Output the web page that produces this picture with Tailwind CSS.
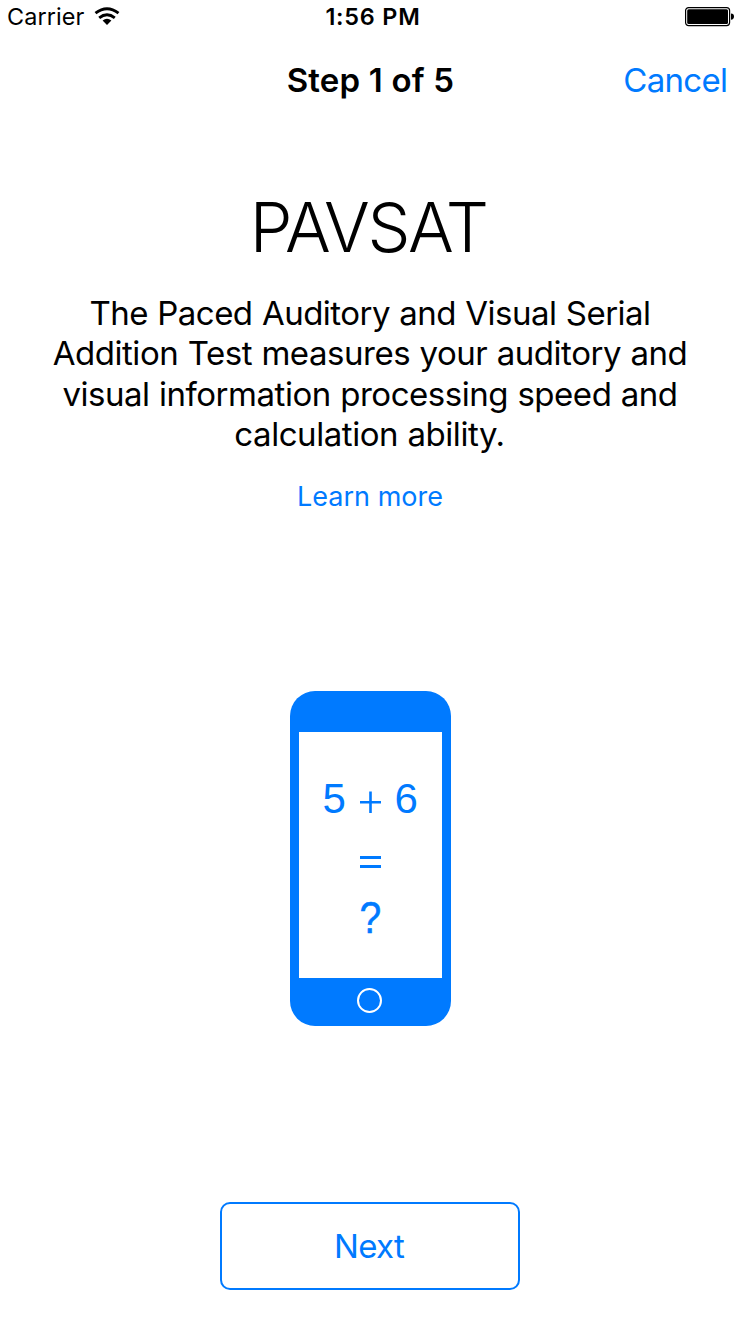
<!DOCTYPE html>
<html lang="en"><head><meta charset="utf-8"><title>PAVSAT</title>
<script src="https://cdn.jsdelivr.net/npm/@tailwindcss/browser@4"></script></head>
<body class="bg-white text-black font-['Inter',sans-serif]">
<main class="flex h-[1324px] w-[740px] flex-col items-center overflow-visible whitespace-nowrap">
<header class="grid h-[33px] w-full grid-cols-[1fr_auto_1fr] items-center pl-[6px] pr-[5px] leading-[33px]">
<div class="flex items-center gap-[10px] pl-[1px]"><span class="text-[23.4px] tracking-[0.1px]">Carrier</span>
<svg class="mb-px h-[18px] w-[26px]" viewBox="0 0 26 18"><path fill="none" stroke="#000" stroke-width="2.9" d="M1.5 6.2Q13-2.9 24.5 6.2M5.2 10.8Q13 4.6 20.8 10.8"/><path d="M8.6 13.5Q13 10 17.4 13.5L13 18Z"/></svg></div>
<span class="pl-[5px] text-[23.4px] font-semibold tracking-[0.8px]">1:56 PM</span>
<svg class="h-[20px] w-[50px] justify-self-end" viewBox="0 0 50 20"><rect x=".6" y=".6" width="44" height="18" rx="3" fill="none" stroke="#000" stroke-width="1.2"/><rect x="2.2" y="2.2" width="40.8" height="14.8" rx="1.5"/><path d="M46 6.5Q49 6.5 49 9.6T46 12.8Z"/></svg>
</header>
<nav class="grid h-[94px] w-full grid-cols-[1fr_auto_1fr] items-center px-[12px] pt-[2px]">
<span></span><h1 class="pl-px text-[33px] font-semibold tracking-[0.2px]">Step 1 of 5</h1><a class="justify-self-end pr-[0.7px] text-[33px] tracking-[-0.7px] text-[#007aff]">Cancel</a></nav>
<h2 class="mt-[60px] pr-[3.6px] text-[68px] font-light leading-[80px] tracking-[-2.3px]">PAVSAT</h2>
<p class="mt-[26px] flex flex-col items-center text-[33px] leading-[40.33px] [word-spacing:0.6px]"><span class="tracking-[-0.52px]">The Paced Auditory and Visual Serial</span><span class="tracking-[-0.465px]">Addition Test measures your auditory and</span><span class="tracking-[-0.47px]">visual information processing speed and</span><span class="pr-px tracking-[-0.45px]">calculation ability.</span></p>
<a class="mt-[22.7px] text-[27px] leading-[40px] text-[#007aff]">Learn more</a>
<div class="mt-[174px] flex h-[335px] w-[161px] flex-col items-center rounded-[25px] bg-[#007aff] pt-[41px]">
<svg class="h-[246px] w-[143px] bg-white" viewBox="299 732 143 246" fill="#007aff" font-family="Liberation Sans" font-size="42"><text x="322.5" y="813">5</text><text x="394.5" y="813">6</text><path d="M360 801h21v2.5h-21zM369.2 791.5h2.6v21.5h-2.6zM360 856h21v3h-21zM360 865h21v3h-21z"/><text transform="translate(359.6 933) scale(.93 1.04)" stroke="#007aff" stroke-width=".5">?</text></svg>
<div class="mr-[1px] mt-[10px] size-[25px] rounded-full border-2 border-white"></div></div>
<button class="mt-[176px] h-[88px] w-[300px] rounded-[10px] border-2 border-[#007aff] pr-[2px] pt-[2px] text-[33px] tracking-[-0.7px] text-[#007aff]">Next</button>
</main>
</body></html>
